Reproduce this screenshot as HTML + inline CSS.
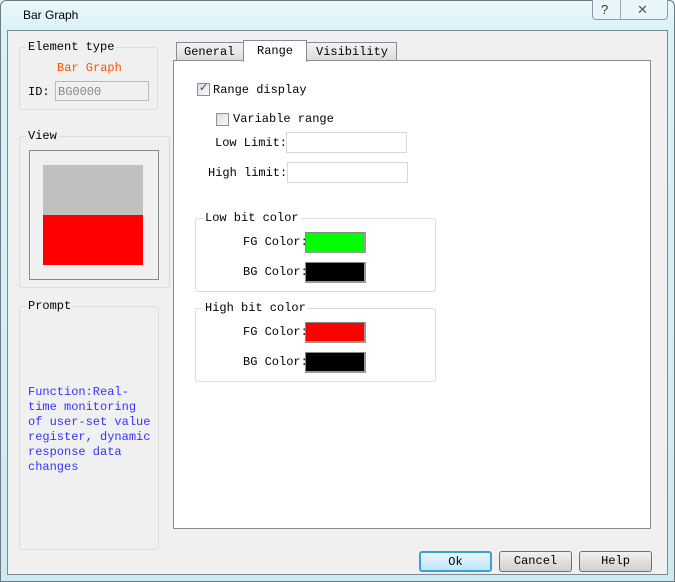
<!DOCTYPE html>
<html><head><meta charset="utf-8"><style>
*{margin:0;padding:0;box-sizing:border-box}
body{width:675px;height:582px;overflow:hidden;background:#e4f5fb;position:relative;font-family:"Liberation Mono",monospace;font-size:12px;color:#000}
.a{position:absolute}
.t{position:absolute;white-space:nowrap;line-height:14px}
.grp{position:absolute;border:1px solid #dcdcdc;border-radius:3px}
.lbl{position:absolute;background:#f0f0f0;padding:0 2px;white-space:nowrap;line-height:14px}
.wl{background:#fff}
.inp{position:absolute;background:#fff;border:1px solid #d4d8dd}
.sw{position:absolute;border:1px solid #888;border-right:2px solid #999;border-bottom:2px solid #999}
.btn{position:absolute;height:21px;width:73px;border:1px solid #707070;border-radius:3px;background:linear-gradient(#f2f2f2,#e0e0e0 50%,#d0d0d0);text-align:center;line-height:19px}
.cb{position:absolute;width:13px;height:13px;border:1px solid #8e8f8f;background:linear-gradient(135deg,#dcdcdc,#fafafa)}
</style></head><body>
<div class="a" style="left:0;top:0;width:675px;height:582px;border:1px solid #6c7b82;border-radius:6px 6px 0 0;background:linear-gradient(#eafafe,#d9f1f9 30px,#cfe9f3)"></div>
<div class="t" style="left:23px;top:8px;font-family:'Liberation Sans',sans-serif;font-size:12px">Bar Graph</div>
<div class="a" style="left:592px;top:0;width:76px;height:20px;border:1px solid #8a9ca5;border-top:none;border-radius:0 0 4px 4px;background:#e8f6fb"></div>
<div class="a" style="left:620px;top:0;width:1px;height:19px;background:#9aa"></div>
<div class="t" style="left:601px;top:3px;font-family:'Liberation Sans',sans-serif;font-size:13px;color:#333">?</div>
<div class="t" style="left:637px;top:3px;font-family:'Liberation Sans',sans-serif;font-size:13px;color:#555">✕</div>
<div class="a" style="left:7px;top:30px;width:661px;height:545px;background:#f0f0f0;border:1px solid #7a8a92"></div>

<div class="grp" style="left:19px;top:47px;width:139px;height:63px"></div>
<div class="lbl" style="left:26px;top:40px">Element type</div>
<div class="t" style="left:57px;top:61px;color:#ff5000">Bar Graph</div>
<div class="t" style="left:28px;top:85px">ID:</div>
<div class="a" style="left:55px;top:81px;width:94px;height:20px;border:1px solid #b8b8b8;background:#f0f0f0"></div>
<div class="t" style="left:58px;top:85px;color:#888">BG0000</div>

<div class="grp" style="left:19px;top:136px;width:151px;height:152px"></div>
<div class="lbl" style="left:26px;top:129px">View</div>
<div class="a" style="left:29px;top:150px;width:130px;height:130px;border:1px solid #888"></div>
<div class="a" style="left:43px;top:165px;width:100px;height:50px;background:#c0c0c0"></div>
<div class="a" style="left:43px;top:215px;width:100px;height:50px;background:#f00"></div>

<div class="grp" style="left:19px;top:306px;width:140px;height:244px"></div>
<div class="lbl" style="left:26px;top:299px">Prompt</div>
<div class="t" style="left:28px;top:385px;color:#3333ff;line-height:15px">Function:Real-<br>time monitoring<br>of user-set value<br>register, dynamic<br>response data<br>changes</div>

<div class="a" style="left:173px;top:60px;width:478px;height:469px;background:#fff;border:1px solid #898c95"></div>
<div class="a" style="left:176px;top:42px;width:68px;height:19px;border:1px solid #898c95;background:linear-gradient(#f2f2f2,#dcdcdc)"></div>
<div class="t" style="left:184px;top:45px">General</div>
<div class="a" style="left:306px;top:42px;width:91px;height:19px;border:1px solid #898c95;background:linear-gradient(#f2f2f2,#dcdcdc)"></div>
<div class="t" style="left:316px;top:45px">Visibility</div>
<div class="a" style="left:243px;top:40px;width:64px;height:22px;border:1px solid #898c95;border-bottom:none;background:#fff"></div>
<div class="t" style="left:257px;top:44px">Range</div>

<div class="cb" style="left:197px;top:83px"></div>
<div class="t" style="left:197px;top:81px;color:#3a4a9a;font-size:13px;width:13px;text-align:center">✓</div>
<div class="t" style="left:213px;top:83px">Range display</div>
<div class="cb" style="left:216px;top:113px"></div>
<div class="t" style="left:233px;top:112px">Variable range</div>
<div class="t" style="left:215px;top:136px">Low Limit:</div>
<div class="inp" style="left:286px;top:132px;width:121px;height:21px"></div>
<div class="t" style="left:208px;top:166px">High limit:</div>
<div class="inp" style="left:287px;top:162px;width:121px;height:21px"></div>

<div class="grp" style="left:195px;top:218px;width:241px;height:74px"></div>
<div class="lbl wl" style="left:203px;top:211px">Low bit color</div>
<div class="t" style="left:243px;top:235px">FG Color:</div>
<div class="sw" style="left:305px;top:232px;width:61px;height:21px;background:#0f0"></div>
<div class="t" style="left:243px;top:265px">BG Color:</div>
<div class="sw" style="left:305px;top:262px;width:61px;height:21px;background:#000"></div>

<div class="grp" style="left:195px;top:308px;width:241px;height:74px"></div>
<div class="lbl wl" style="left:203px;top:301px">High bit color</div>
<div class="t" style="left:243px;top:325px">FG Color:</div>
<div class="sw" style="left:305px;top:322px;width:61px;height:21px;background:#f00"></div>
<div class="t" style="left:243px;top:355px">BG Color:</div>
<div class="sw" style="left:305px;top:352px;width:61px;height:21px;background:#000"></div>

<div class="btn" style="left:419px;top:551px;border:2px solid #3c9fd8;background:linear-gradient(#eaf6fd,#bee6fd)">Ok</div>
<div class="btn" style="left:499px;top:551px">Cancel</div>
<div class="btn" style="left:579px;top:551px">Help</div>
</body></html>
